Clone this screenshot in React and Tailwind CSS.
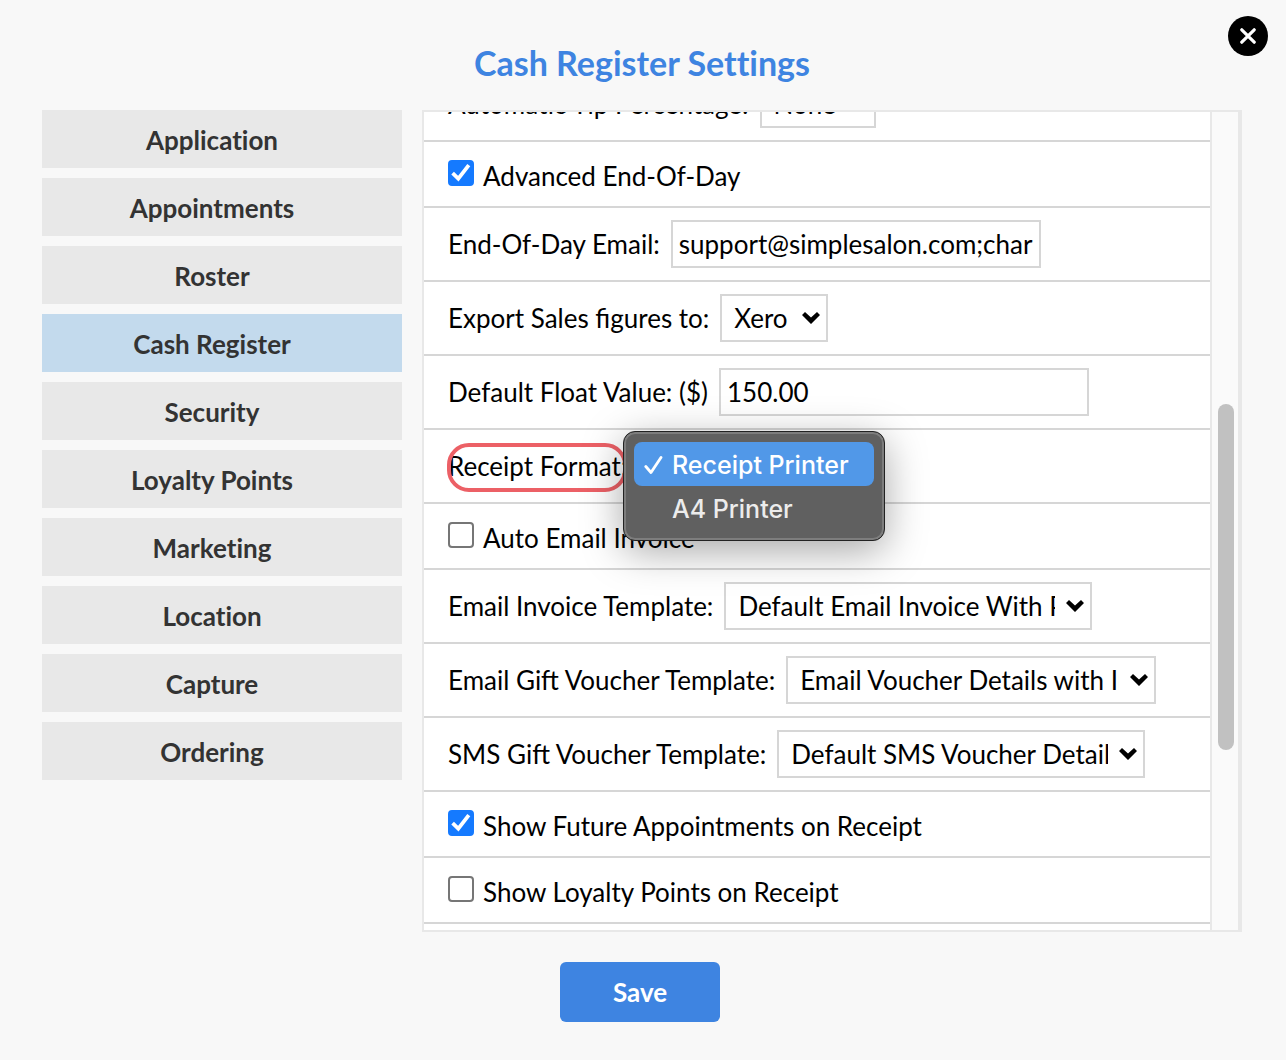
import { useState } from "react";

const sections = [
  "Application",
  "Appointments",
  "Roster",
  "Cash Register",
  "Security",
  "Loyalty Points",
  "Marketing",
  "Location",
  "Capture",
  "Ordering",
];

const receiptFormats = ["Receipt Printer", "A4 Printer"];

function FieldRow({ id, label, children }) {
  return (
    <div className="flex items-center gap-[11px] border-b-2 border-[#d6d6d6] px-6 py-3">
      <label htmlFor={id} className="shrink-0 whitespace-nowrap">{label}</label>
      {children}
    </div>
  );
}

function CheckRow({ id, label, defaultChecked }) {
  return (
    <div className="flex h-[66px] items-start gap-[9px] border-b-2 border-[#d6d6d6] px-6 pt-[18px]">
      <span className="relative size-[26px] shrink-0">
        <input
          id={id}
          type="checkbox"
          defaultChecked={defaultChecked}
          className="peer block size-[26px] appearance-none rounded-[4px] border-2 border-[#767676] bg-white checked:border-[#157aff] checked:bg-[#157aff]"
        />
        <svg className="pointer-events-none absolute inset-0 hidden size-[26px] peer-checked:block" viewBox="0 0 26 26" fill="none" stroke="white" strokeWidth="3.8" aria-hidden="true">
          <path d="M4.6 13.2 10.3 18.6 20.8 5.2" />
        </svg>
      </span>
      <label htmlFor={id}>{label}</label>
    </div>
  );
}

function SelectBox({ id, width, options }) {
  return (
    <div className={`relative ${width}`}>
      <select id={id} className="h-12 w-full appearance-none overflow-hidden border-2 border-[#d6d6d6] bg-white pr-[35px] pl-3">
        {options.map((option) => (
          <option key={option}>{option}</option>
        ))}
      </select>
      <svg className="pointer-events-none absolute top-[18px] right-2 h-3 w-[18px]" viewBox="0 0 18 12" aria-hidden="true">
        <path d="M0 3 3 0 9 5.6 15 0 18 3 9 12Z" />
      </svg>
    </div>
  );
}

function FormatMenu() {
  const [selected, setSelected] = useState("Receipt Printer");

  return (
    <div
      role="listbox"
      aria-labelledby="receipt-format"
      className="absolute top-px left-[199px] z-10 w-[262px] rounded-[12px] border border-[#222] bg-[#606060] p-[10px] font-['Inter',sans-serif] text-[25px] font-medium text-[#ececec] shadow-[0_10px_40px_rgba(0,0,0,0.35)] inset-ring-2 inset-ring-[#7d7d7d]"
    >
      {receiptFormats.map((format) => (
        <button
          key={format}
          role="option"
          aria-selected={selected === format}
          onClick={() => setSelected(format)}
          className={`flex h-11 w-full items-center rounded-[8px] pt-0.5 pl-[10px] whitespace-nowrap ${selected === format ? "bg-[#5198e8] text-white" : ""}`}
        >
          <span className="w-7 shrink-0">
            {selected === format && (
              <svg className="h-5 w-[19px]" viewBox="0 0 19 20" fill="none" stroke="white" strokeWidth="2.8" strokeLinecap="round" strokeLinejoin="round" aria-hidden="true">
                <path d="M1.8 11.5 7 17.5 17 2.5" />
              </svg>
            )}
          </span>
          {format}
        </button>
      ))}
    </div>
  );
}

export default function App() {
  const [active, setActive] = useState("Cash Register");

  return (
    <main className="relative min-h-screen bg-[#f8f8f8] pt-10 pr-11 pb-[38px] pl-[42px] font-['Lato',sans-serif] text-[26px] leading-8 text-black">
      <button aria-label="Close" className="absolute top-4 right-[18px] flex size-10 items-center justify-center rounded-full bg-black">
        <svg className="size-4" viewBox="0 0 16 16" stroke="white" strokeWidth="3.2" strokeLinecap="round" aria-hidden="true">
          <path d="M1.8 1.8 14.2 14.2M14.2 1.8 1.8 14.2" />
        </svg>
      </button>

      <h1 className="text-center text-[34px] leading-[46px] font-bold text-[#3e84e1] [font-variant-ligatures:none]">Cash Register Settings</h1>

      <div className="mt-6 flex items-start gap-5">
        <nav className="flex w-[360px] shrink-0 flex-col gap-[10px]">
          {sections.map((section) => (
            <button
              key={section}
              onClick={() => setActive(section)}
              className={`h-[58px] pt-0.5 pr-5 font-bold text-[#333] [font-variant-ligatures:none] ${active === section ? "bg-[#c3daed]" : "bg-[#e8e8e8]"}`}
            >
              {section}
            </button>
          ))}
        </nav>

        <section className="flex min-w-0 flex-1 overflow-hidden border-2 border-[#e8e8e8] bg-white">
          <div className="-mt-11 min-w-0 flex-1 pb-[6px]">
            <FieldRow id="tip" label="Automatic Tip Percentage:">
              <SelectBox id="tip" width="w-[116px]" options={["None"]} />
            </FieldRow>
            <CheckRow id="advanced" label="Advanced End-Of-Day" defaultChecked />
            <FieldRow id="email" label="End-Of-Day Email:">
              <input id="email" type="text" defaultValue="support@simplesalon.com;charles@simplesalon.com" className="h-12 w-[370px] border-2 border-[#d6d6d6] bg-white px-[6px]" />
            </FieldRow>
            <FieldRow id="export" label="Export Sales figures to:">
              <SelectBox id="export" width="w-[108px]" options={["Xero", "MYOB"]} />
            </FieldRow>
            <FieldRow id="float" label="Default Float Value: ($)">
              <input id="float" type="text" defaultValue="150.00" className="h-12 w-[370px] border-2 border-[#d6d6d6] bg-white px-[6px]" />
            </FieldRow>
            <div className="relative flex h-[74px] items-center border-b-2 border-[#d6d6d6] px-6">
              <span id="receipt-format">Receipt Format:</span>
              <span className="pointer-events-none absolute top-[13px] left-[23px] h-[49px] w-[180px] rounded-[22px] border-4 border-[#ec6066]" />
              <FormatMenu />
            </div>
            <CheckRow id="auto-email" label="Auto Email Invoice" />
            <FieldRow id="invoice" label="Email Invoice Template:">
              <SelectBox id="invoice" width="w-[368px]" options={["Default Email Invoice With Payment Details"]} />
            </FieldRow>
            <FieldRow id="email-voucher" label="Email Gift Voucher Template:">
              <SelectBox id="email-voucher" width="w-[370px]" options={["Email Voucher Details with Image"]} />
            </FieldRow>
            <FieldRow id="sms-voucher" label="SMS Gift Voucher Template:">
              <SelectBox id="sms-voucher" width="w-[368px]" options={["Default SMS Voucher Details"]} />
            </FieldRow>
            <CheckRow id="future" label="Show Future Appointments on Receipt" defaultChecked />
            <CheckRow id="loyalty" label="Show Loyalty Points on Receipt" />
          </div>
          <div className="w-[30px] shrink-0 border-x-2 border-[#e8e8e8] bg-[#fafafa] px-[6px] pt-[292px]">
            <div className="h-[346px] w-4 rounded-full bg-[#c1c1c1]" />
          </div>
        </section>
      </div>

      <div className="mt-[30px] flex justify-center pr-1">
        <button className="h-[60px] w-40 rounded-[6px] bg-[#3e84e1] font-bold text-white">Save</button>
      </div>
    </main>
  );
}
